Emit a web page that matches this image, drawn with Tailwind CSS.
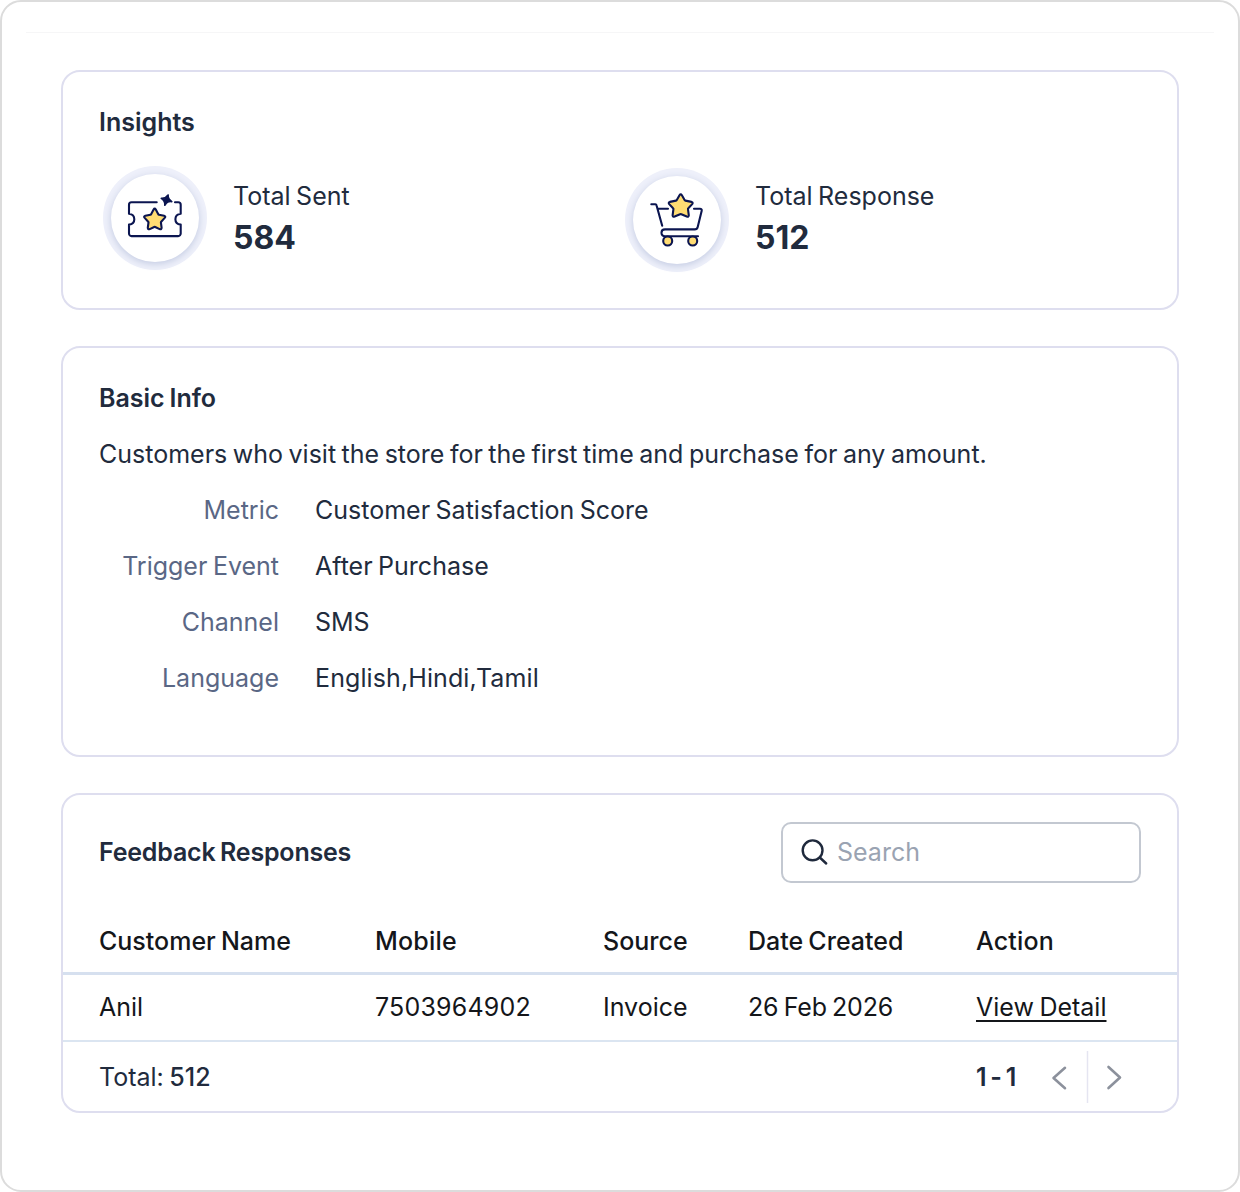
<!DOCTYPE html>
<html lang="en">
<head>
    <meta charset="UTF-8">
    <meta name="viewport" content="width=device-width, initial-scale=1.0">
    <title>Feedback | Insights</title>
    <script src="https://cdn.jsdelivr.net/npm/@tailwindcss/browser@4"></script>
</head>
<body class="bg-white font-['Inter','Liberation_Sans',sans-serif] text-[25px] leading-8 [word-spacing:-1.5px] text-[#212b3d]">
<div class="h-[1192px] w-[1240px] overflow-hidden rounded-[21px] border-2 border-[#dcdcdc] bg-white px-6 pt-[30px]">
    <div class="flex flex-col gap-9 border-t border-[#f6f6f7] px-[35px] pt-[37px]">

        <!-- Insights -->
        <section class="h-60 w-[1118px] rounded-[19px] border-2 border-[#dedeef] px-9 pt-[34px]">
            <h2 class="font-semibold">Insights</h2>
            <div class="mt-[26px] grid grid-cols-[522px_1fr]">
                <div class="flex gap-[26px] pl-1">
                    <div class="mt-[2px] size-[104px] rounded-full bg-[#eef0fa] p-2">
                        <div class="size-[88px] rounded-full bg-white shadow-[0_2px_7px_#c3cbe2]">
                            <svg class="size-[88px]" viewBox="0 0 88 88" fill="none" stroke="#0b1550" stroke-width="2.1" stroke-linecap="round" stroke-linejoin="round">
                                <path d="M45.7 28.3H20.5a2.5 2.5 0 0 0-2.5 2.5v9c3.5.4 5.3 2.6 5.3 5.4s-1.8 5-5.3 5.4v9a2.5 2.5 0 0 0 2.5 2.5h46.7a2.5 2.5 0 0 0 2.5-2.5v-9c-3.5-.4-5.3-2.6-5.3-5.4s1.8-5 5.3-5.4v-9a2.5 2.5 0 0 0-2.5-2.5H64"/>
                                <path fill="#ffdc73" d="M42.6 35.6q1.1-1.9 2.2 0l2.5 4.6q.2.4.7.5l5.1 1q2 .6.6 2.2l-3.5 3.8q-.3.4-.3.8l.7 5.2q0 2.1-2 1.4l-4.4-2.1q-.5-.2-1 0L38.8 55.1q-2 .7-2-1.4l.7-5.2q0-.4-.3-.8L33.7 43.9q-1.4-1.6.6-2.2l5.1-1q.5-.1.7-.5Z"/>
                                <path fill="#0b1550" stroke-width="1.6" transform="rotate(12 55.5 26.2)" d="M56 20.8c.4 3.2 1.500 4.300 5 5.700-3.600.3-4.700 1.400-6.100 5-.4-3.500-1.400-4.700-4.900-6 3.500-.4 4.600-1.400 6-4.700Z"/>
                            </svg>
                        </div>
                    </div>
                    <div class="pt-4">
                        <p>Total Sent</p>
                        <p class="mt-2 text-[32px] leading-9 font-bold">584</p>
                    </div>
                </div>
                <div class="flex gap-[26px] pl-1">
                    <div class="mt-1 size-[104px] rounded-full bg-[#eef0fa] p-2">
                        <div class="size-[88px] rounded-full bg-white shadow-[0_2px_7px_#c3cbe2]">
                            <svg class="size-[88px]" viewBox="0 0 88 88" fill="none" stroke="#0b1550" stroke-width="2.1" stroke-linecap="round" stroke-linejoin="round">
                                <path d="M18.3 28.3h4q1 0 1.2 1l5.7 20.4M25 32.7h10M61 32.7h6c1.4 0 2 .9 1.7 2L64.7 51c-.4 1.7-1.2 2.4-3 2.4H32c-4.6 0-4.8 6.900 0 6.900h33"/>
                                <path fill="#ffdc73" d="M46.5 19.3q1.2-1.9 2.4 0l2.7 4.7q.3.5.8.6l6.1 1.3q1.9.6.7 2.2l-3.9 4.2q-.4.4-.3 1l.8 6q-.1 1.9-2 1.2l-5.500-2.300q-.6-.2-1.200 0l-5.500 2.300q-1.900.7-2-1.200l.8-6q.1-.6-.3-1l-3.900-4.200q-1.200-1.600.7-2.200l6.100-1.300q.5-.1.8-.6Z"/>
                                <circle cx="34.7" cy="65" r="4.5" fill="#ffdc73"/>
                                <circle cx="59.7" cy="65" r="4.5" fill="#ffdc73"/>
                            </svg>
                        </div>
                    </div>
                    <div class="pt-4">
                        <p>Total Response</p>
                        <p class="mt-2 text-[32px] leading-9 font-bold">512</p>
                    </div>
                </div>
            </div>
        </section>

        <!-- Basic info -->
        <section class="h-[411px] w-[1118px] rounded-[19px] border-2 border-[#dedeef] px-9 pt-[34px]">
            <h2 class="font-semibold">Basic Info</h2>
            <p class="mt-6 whitespace-nowrap">Customers who visit the store for the first time and purchase for any amount.</p>
            <dl class="mt-6 grid grid-cols-[180px_1fr] gap-x-9 gap-y-6">
                <dt class="text-right text-[#5a6785]">Metric</dt>
                <dd>Customer Satisfaction Score</dd>
                <dt class="text-right text-[#5a6785]">Trigger Event</dt>
                <dd>After Purchase</dd>
                <dt class="text-right text-[#5a6785]">Channel</dt>
                <dd>SMS</dd>
                <dt class="text-right text-[#5a6785]">Language</dt>
                <dd class="tracking-[0.1px]">English,Hindi,Tamil</dd>
            </dl>
        </section>

        <!-- Feedback responses -->
        <section class="h-80 w-[1118px] rounded-[19px] border-2 border-[#dedeef]">
            <div class="flex items-center justify-between px-9 pt-[27px]">
                <h2 class="-mt-px font-semibold tracking-[-0.2px]">Feedback Responses</h2>
                <div class="flex h-[61px] w-[360px] items-center gap-[7px] rounded-[10px] border-2 border-[#c3c8d1] pl-[17px]">
                    <svg class="size-[30px]" viewBox="0 0 30 30" fill="none" stroke="#1f293c" stroke-width="2.4" stroke-linecap="round">
                        <circle cx="12.6" cy="12.3" r="9.9"/>
                        <path d="m19.8 19.500 6.400 6"/>
                    </svg>
                    <span class="-mt-px text-[#9aa3b2]">Search</span>
                </div>
            </div>
            <table class="mt-[26px] w-full table-fixed border-collapse text-left text-[#14161a]">
                <colgroup>
                    <col class="w-[312px]">
                    <col class="w-[228px]">
                    <col class="w-[145px]">
                    <col class="w-[228px]">
                    <col>
                </colgroup>
                <thead>
                <tr class="h-[64px] border-b-3 border-[#d6e0ef]">
                    <th class="pt-[2px] pl-9 font-medium">Customer Name</th>
                    <th class="pt-[2px] font-medium tracking-[0.2px]">Mobile</th>
                    <th class="pt-[2px] font-medium">Source</th>
                    <th class="pt-[2px] font-medium">Date Created</th>
                    <th class="pt-[2px] font-medium tracking-[0.2px]">Action</th>
                </tr>
                </thead>
                <tbody>
                <tr class="h-[68px] border-b-2 border-[#dbe5f1]">
                    <td class="pl-9">Anil</td>
                    <td class="tracking-[0.2px]">7503964902</td>
                    <td>Invoice</td>
                    <td class="tracking-[-0.2px]">26 Feb 2026</td>
                    <td><a href="#" class="underline decoration-2 underline-offset-4">View Detail</a></td>
                </tr>
                </tbody>
            </table>
            <div class="flex h-[70px] items-center pl-9">
                <p class="w-[877px]">Total: <span class="font-medium">512</span></p>
                <span class="w-[63px] font-semibold tracking-[-0.5px]">1 - 1</span>
                <svg class="h-[52px] w-[96px]" viewBox="0 0 96 52" fill="none" stroke="#8c919c" stroke-width="2.6" stroke-linecap="round" stroke-linejoin="round">
                    <path d="M26 16.8 14.5 27 26 37.2M69.500 16 81 26.500 69.500 37"/>
                    <path stroke="#e5e5f1" stroke-width="1.5" d="M48.5 0v52"/>
                </svg>
            </div>
        </section>
    </div>
</div>
</body>
</html>
